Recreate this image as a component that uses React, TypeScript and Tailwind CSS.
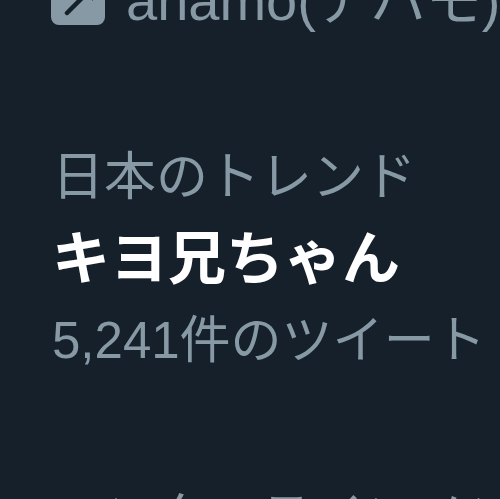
import React from "react";

const font = { fontFamily: '"Liberation Sans", "Noto Sans CJK JP", sans-serif' };

function PromotedIcon() {
  return (
    <svg width="54" height="54" viewBox="0 0 54 54" className="shrink-0">
      <rect x="0" y="0" width="54" height="54" rx="8" fill="#8899a6" />
      <line x1="16" y1="42" x2="35" y2="23" stroke="#15202b" strokeWidth="4.5" strokeLinecap="round" />
      <path d="M24 12 H42 V30 Z" fill="#15202b" />
    </svg>
  );
}

export default function App() {
  return (
    <div
      className="w-[500px] h-[499px] overflow-hidden bg-[#15202b] text-[#8899a6]"
      style={font}
    >
      <div className="pl-[51px]">
        <div className="flex items-end gap-[21px] h-[62px] mt-[-37px] whitespace-nowrap">
          <PromotedIcon />
          <span className="text-[56px] leading-[62px] translate-y-[7px]">ahamo(アハモ)</span>
        </div>
      </div>
      <div className="pl-[52px] mt-[111px] whitespace-nowrap">
        <div className="text-[52px] leading-[82px]">日本のトレンド</div>
        <div className="text-[58px] leading-[82px] font-bold text-white">キヨ兄ちゃん</div>
        <div className="text-[51px] leading-[82px]">5,241件のツイート</div>
        <div className="mt-[95px] text-[52px] leading-[82px]">エンターテインメント・トレンド</div>
      </div>
    </div>
  );
}
